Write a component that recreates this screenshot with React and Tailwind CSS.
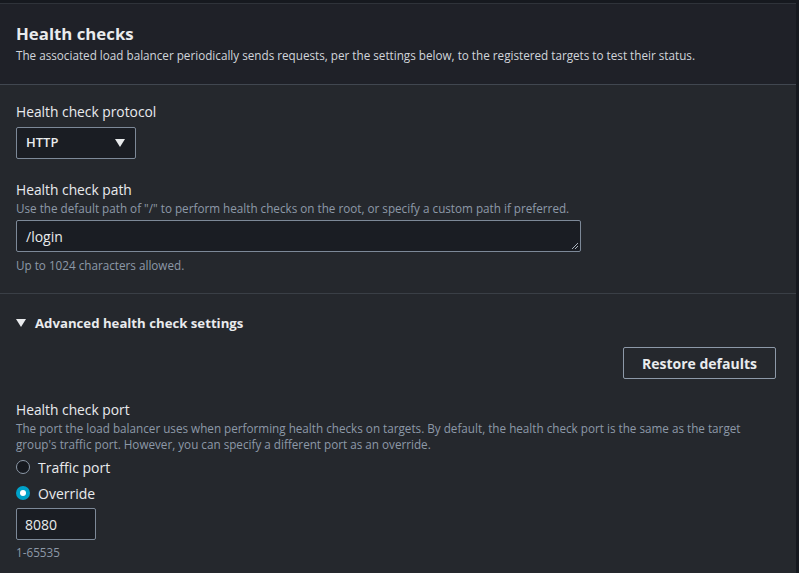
export default function App() {
  return (
    <div
      className="w-[799px] h-[573px] overflow-hidden bg-[#16191f] pt-[3px] pr-[3px]"
      style={{ fontFamily: '"Open Sans", "Noto Sans", sans-serif' }}
    >
      <div className="h-full bg-[#25282d] border-t border-[#2f333a]">
        {/* Header */}
        <div className="bg-[#1f2128] px-4 pt-[18px] pb-[20px] border-b border-[#414750]">
          <h2 className="text-[16.8px] leading-[24px] font-bold text-[#e9ebed]">Health checks</h2>
          <p className="text-[11.7px] leading-[18px] text-[#d1d5db]">
            The associated load balancer periodically sends requests, per the settings below, to the registered targets to test their status.
          </p>
        </div>

        {/* Basic settings */}
        <div className="px-4 pt-[17px] pb-[20px] border-b border-[#3a3f46]">
          <label className="block text-[13.8px] leading-[20px] text-[#e9ebed]">Health check protocol</label>
          <div className="mt-[5px] w-[120px] h-[32px] flex items-center justify-between pl-[9px] pr-[10px] bg-[#1a1d23] border border-[#7d8998] rounded-[2px]">
            <span className="text-[13px] text-[#e9ebed] font-semibold">HTTP</span>
            <svg width="10" height="8" viewBox="0 0 10 8">
              <path d="M0 0 L10 0 L5 8 Z" fill="#e9ebed" />
            </svg>
          </div>

          <label className="block mt-[21px] text-[13.8px] leading-[20px] text-[#e9ebed]">Health check path</label>
          <p className="text-[11.7px] leading-[16px] text-[#8d99a8]">
            Use the default path of "/" to perform health checks on the root, or specify a custom path if preferred.
          </p>
          <div className="relative mt-[4px] w-[565px] h-[32px] flex items-center px-[9px] bg-[#1a1d23] border border-[#7d8998] rounded-[2px]">
            <span className="text-[14px] text-[#e9ebed]">/login</span>
            <svg className="absolute right-[1px] bottom-[1px]" width="8" height="8" viewBox="0 0 8 8">
              <path d="M7 1 L1 7 M7 4 L4 7" stroke="#aab2bd" strokeWidth="1" />
            </svg>
          </div>
          <p className="mt-[5px] text-[11.7px] leading-[16px] text-[#8d99a8]">Up to 1024 characters allowed.</p>
        </div>

        {/* Advanced */}
        <div className="px-4 pt-[19px]">
          <div className="flex items-center gap-[9px]">
            <svg width="10" height="8" viewBox="0 0 10 8">
              <path d="M0 0 L10 0 L5 8 Z" fill="#e9ebed" />
            </svg>
            <span className="text-[13.2px] leading-[20px] font-bold text-[#e9ebed]">Advanced health check settings</span>
          </div>

          <div className="flex justify-end mt-[14px] pr-[4px]">
            <button className="w-[153px] h-[32px] border border-[#8d99a8] rounded-[2px] text-[14px] font-bold text-[#e9ebed]">
              Restore defaults
            </button>
          </div>

          <label className="block mt-[21px] text-[13.8px] leading-[20px] text-[#e9ebed]">Health check port</label>
          <p className="text-[11.7px] leading-[16px] text-[#8d99a8] w-[740px]">
            The port the load balancer uses when performing health checks on targets. By default, the health check port is the same as the target group's traffic port. However, you can specify a different port as an override.
          </p>

          <div className="mt-[5px] flex items-center gap-[8px] h-[20px]">
            <span className="w-[14px] h-[14px] rounded-full border border-[#8d99a8] bg-[#16191f]" />
            <span className="text-[14px] text-[#e9ebed]">Traffic port</span>
          </div>
          <div className="mt-[6px] flex items-center gap-[8px] h-[20px]">
            <span className="w-[14px] h-[14px] rounded-full bg-[#00a1c9] flex items-center justify-center">
              <span className="w-[6px] h-[6px] rounded-full bg-white" />
            </span>
            <span className="text-[14px] text-[#e9ebed]">Override</span>
          </div>

          <div className="mt-[5px] w-[80px] h-[32px] flex items-center px-[8px] bg-[#1a1d23] border border-[#7d8998] rounded-[2px]">
            <span className="text-[14px] text-[#e9ebed]">8080</span>
          </div>
          <p className="mt-[4px] text-[11.7px] leading-[16px] text-[#8d99a8]">1-65535</p>
        </div>
      </div>
    </div>
  );
}
